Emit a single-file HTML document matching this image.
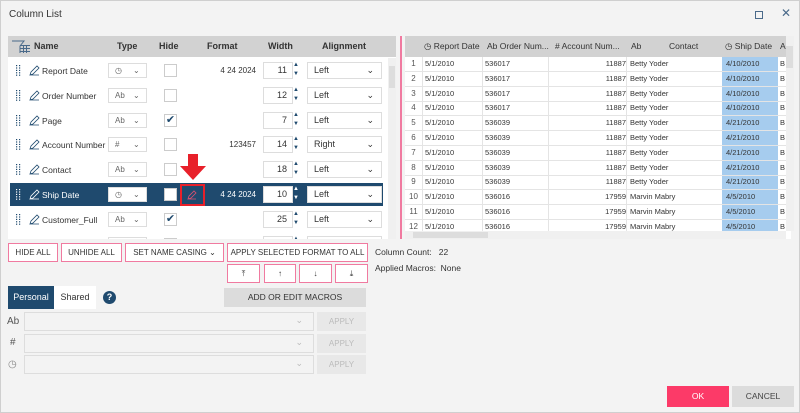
<!DOCTYPE html>
<html><head><style>
*{box-sizing:border-box;margin:0;padding:0}
body{width:800px;height:413px;background:#f3f3f3;font-family:"Liberation Sans",sans-serif;position:relative;overflow:hidden;color:#333;border:1px solid #cfcfcf}
.a{position:absolute}
.hdr{background:#d2d2d2;font-weight:bold;font-size:9px;color:#333}
.row{position:absolute;left:2px;width:373px;height:23px;background:#fff;font-size:8.5px;white-space:nowrap}
.row.sel{background:#1f4a6e;color:#fff}
.sel2{position:absolute;border:1px solid #ddd;background:#fff;height:15px;top:4px}
.cb{position:absolute;top:5px;width:13px;height:13px;border:1px solid #ccc;background:#fff;font-size:11px;color:#1f4a6e;line-height:11px;text-align:center}
.btn{position:absolute;border:1px solid #f07aa0;background:#fff;font-size:8px;text-align:center;line-height:17px;color:#333;height:19px;white-space:nowrap}
.tr{position:absolute;left:404px;width:381px;height:15px;border-bottom:1px solid #e4e4e4;font-size:7.5px;line-height:14px;white-space:nowrap}
.tr span{position:absolute}
</style></head><body>
<div class="a" style="left:8px;top:8px;font-size:10px;color:#333">Column List</div>
<div class="a" style="left:754px;top:10px;width:8px;height:8px;border:1px solid #4a6a8a"></div>
<div class="a" style="left:780px;top:5px;font-size:12px;color:#4a6a8a">✕</div>

<div class="a" style="left:7px;top:35px;width:388px;height:203px;background:#fff"></div>
<div class="a hdr" style="left:7px;top:35px;width:388px;height:21px">
<svg class="a" style="left:3px;top:3px" width="20" height="16"><path d="M1 2h12l-4 5v7" stroke="#4a6a8a" fill="none"/><g fill="#4a6a8a"><rect x="9" y="6" width="10" height="1"/><rect x="9" y="9" width="10" height="1"/><rect x="9" y="12" width="10" height="1"/><rect x="12" y="6" width="1" height="8"/><rect x="15" y="6" width="1" height="8"/></g></svg>
<span class="a" style="left:26px;top:5px">Name</span><span class="a" style="left:109px;top:5px">Type</span><span class="a" style="left:151px;top:5px">Hide</span><span class="a" style="left:199px;top:5px">Format</span><span class="a" style="left:260px;top:5px">Width</span><span class="a" style="left:314px;top:5px">Alignment</span></div>
<div class="a" style="left:387px;top:57px;width:8px;height:181px;background:#f0f0f0"></div>
<div class="a" style="left:388px;top:65px;width:6px;height:22px;background:#ddd"></div>
<div class="a" style="left:399px;top:35px;width:2px;height:203px;background:#f07aa0"></div>

<div id="rows" class="a" style="left:7px;top:57px;width:380px;height:181px;overflow:hidden"></div>
<div class="a" style="left:179px;top:183px;width:25px;height:22px;border:2px solid #e8202a"></div>
<svg class="a" style="left:185px;top:188px" width="12" height="12"><path d="M2 10l1-3 5-5 2 2-5 5z M2 10h8" stroke="#e05070" fill="none" stroke-width="0.8"/></svg>
<svg class="a" style="left:178px;top:153px" width="28" height="28"><path d="M9 0h10v12h8l-13 14-13-14h8z" fill="#e8202a"/></svg>

<div class="a" style="left:404px;top:35px;width:386px;height:203px;background:#fff"></div>
<div class="a hdr" style="left:404px;top:35px;width:381px;height:21px;font-weight:normal;font-size:8.5px;line-height:21px;white-space:nowrap;overflow:hidden">
<span class="a" style="left:19px">◷ Report Date</span><span class="a" style="left:82px">Ab Order Num...</span><span class="a" style="left:150px"># Account Num...</span><span class="a" style="left:226px">Ab</span><span class="a" style="left:264px">Contact</span><span class="a" style="left:320px">◷ Ship Date</span><span class="a" style="left:375px">A</span></div>
<div class="a" style="left:721px;top:56px;width:56px;height:174px;background:#a6ccee"></div>
<div id="trs"></div>
<div class="a" style="left:785px;top:35px;width:8px;height:195px;background:#f0f0f0"></div>
<div class="a" style="left:785px;top:45px;width:7px;height:22px;background:#ddd"></div>
<div class="a" style="left:404px;top:230px;width:381px;height:8px;background:#f0f0f0"></div>
<div class="a" style="left:412px;top:231px;width:75px;height:6px;background:#ddd"></div>

<div class="btn" style="left:7px;top:242px;width:50px">HIDE ALL</div>
<div class="btn" style="left:60px;top:242px;width:61px">UNHIDE ALL</div>
<div class="btn" style="left:124px;top:242px;width:99px">SET NAME CASING ⌄</div>
<div class="btn" style="left:226px;top:242px;width:141px">APPLY SELECTED FORMAT TO ALL</div>
<div class="btn" style="left:226px;top:263px;width:33px">⤒</div>
<div class="btn" style="left:263px;top:263px;width:32px">↑</div>
<div class="btn" style="left:298px;top:263px;width:33px">↓</div>
<div class="btn" style="left:334px;top:263px;width:33px">⤓</div>
<div class="a" style="left:374px;top:246px;font-size:8.5px">Column Count:&nbsp;&nbsp; 22</div>
<div class="a" style="left:374px;top:262px;font-size:8.5px">Applied Macros:&nbsp; None</div>

<div class="a" style="left:7px;top:285px;width:46px;height:23px;background:#1f4a6e;color:#fff;font-size:9px;line-height:23px;text-align:center">Personal</div>
<div class="a" style="left:53px;top:285px;width:42px;height:23px;background:#fff;font-size:9px;line-height:23px;text-align:center">Shared</div>
<div class="a" style="left:102px;top:290px;width:13px;height:13px;border-radius:50%;background:#1f4a6e;color:#fff;font-size:9px;font-weight:bold;text-align:center;line-height:13px">?</div>
<div class="a" style="left:223px;top:287px;width:142px;height:19px;background:#dcdcdc;font-size:8.5px;text-align:center;line-height:19px">ADD OR EDIT MACROS</div>
<div class="a" style="left:6px;top:315px;font-size:10px;color:#555">Ab</div>
<div class="a" style="left:9px;top:336px;font-size:10px;color:#555">#</div>
<div class="a" style="left:7px;top:358px;font-size:10px;color:#888">◷</div>
<div class="a" style="left:23px;top:311px;width:290px;height:19px;border:1px solid #ddd;background:#f3f3f3"><span class="a" style="right:10px;top:2px;font-size:9px;color:#bbb">⌄</span></div>
<div class="a" style="left:23px;top:333px;width:290px;height:19px;border:1px solid #ddd;background:#f3f3f3"><span class="a" style="right:10px;top:2px;font-size:9px;color:#bbb">⌄</span></div>
<div class="a" style="left:23px;top:354px;width:290px;height:19px;border:1px solid #ddd;background:#f3f3f3"><span class="a" style="right:10px;top:2px;font-size:9px;color:#bbb">⌄</span></div>
<div class="a" style="left:316px;top:311px;width:49px;height:19px;background:#e8e8e8;color:#bbb;font-size:8px;text-align:center;line-height:19px">APPLY</div>
<div class="a" style="left:316px;top:333px;width:49px;height:19px;background:#e8e8e8;color:#bbb;font-size:8px;text-align:center;line-height:19px">APPLY</div>
<div class="a" style="left:316px;top:354px;width:49px;height:19px;background:#e8e8e8;color:#bbb;font-size:8px;text-align:center;line-height:19px">APPLY</div>

<div class="a" style="left:666px;top:385px;width:62px;height:21px;background:#fc3a68;color:#fff;font-size:8.5px;text-align:center;line-height:21px">OK</div>
<div class="a" style="left:731px;top:385px;width:62px;height:21px;background:#dcdcdc;color:#444;font-size:8.5px;text-align:center;line-height:21px">CANCEL</div>

<script>
var R=[["Report Date","◷","","4 24 2024","11","Left"],["Order Number","Ab","","","12","Left"],["Page","Ab","✔","","7","Left"],["Account Number","#","","123457","14","Right"],["Contact","Ab","","","18","Left"],["Ship Date","◷","","4 24 2024","10","Left"],["Customer_Full","Ab","✔","","25","Left"],["","Ab","","","",""]];
var h="";R.forEach(function(r,i){var t=Math.round(1+i*24.8);var s=i==5;var c=s?'#fff':'#1f4a6e';
var dots='';for(var k=0;k<5;k++){dots+='<rect x="0" y="'+(k*2.4)+'" width="1.2" height="1.2"/><rect x="3" y="'+(k*2.4)+'" width="1.2" height="1.2"/>';}
h+='<div class="row'+(s?' sel':'')+'" style="top:'+t+'px">'+
'<svg class="a" style="left:6px;top:6px" width="5" height="12" fill="'+c+'">'+dots+'</svg>'+
'<svg class="a" style="left:19px;top:6px" width="11" height="11"><path d="M1 10l1-3 6-6 2 2-6 6z M1 10h9" stroke="'+c+'" fill="none" stroke-width="0.8"/></svg>'+
'<span class="a" style="left:32px;top:7px">'+r[0]+'</span>'+
'<div class="sel2" style="left:98px;width:39px;color:#666;font-size:8px;line-height:13px;padding-left:6px">'+r[1]+'<span style="position:absolute;left:24px">⌄</span></div>'+
'<div class="cb" style="left:154px">'+r[2]+'</div>'+
(r[3]?'<span class="a" style="right:127px;top:7px;font-size:8px">'+r[3]+'</span>':'')+
'<div class="sel2" style="left:253px;width:30px;height:17px;top:3px;text-align:right;padding-right:5px;color:#333;font-size:9px;line-height:15px">'+r[4]+'</div>'+
'<span class="a" style="left:283px;top:2px;font-size:6px;color:'+c+';line-height:9px">▲<br>▼</span>'+
'<div class="sel2" style="left:297px;width:75px;height:17px;top:3px;color:#333;font-size:9px;line-height:15px;padding-left:6px">'+r[5]+'<span style="position:absolute;right:7px">⌄</span></div></div>';});
document.getElementById("rows").innerHTML=h;
var g="";for(var i=0;i<12;i++){var t=Math.round(56+i*14.8);var pre=i<4?"536017":i<9?"536039":"536016";var acc=i<9?"11887":"17959";var nm=i<9?"Betty Yoder":"Marvin Mabry";var sd=i<4?"4/10/2010":i<9?"4/21/2010":"4/5/2010";
g+='<div class="tr" style="top:'+t+'px'+(i==11?';height:'+(230-t)+'px;overflow:hidden;border:0':'')+'"><span style="left:0;width:17px;text-align:center;font-size:8px;color:#555">'+(i+1)+'</span><span style="left:20px">5/1/2010</span><span style="left:80px">'+pre+'</span><span style="left:143px;width:78px;text-align:right">'+acc+'</span><span style="left:225px">'+nm+'</span><span style="left:321px">'+sd+'</span><span style="left:375px">B</span>'+
'<i style="position:absolute;left:17px;top:0;bottom:0;border-left:1px solid #e4e4e4"></i><i style="position:absolute;left:77px;top:0;bottom:0;border-left:1px solid #e4e4e4"></i><i style="position:absolute;left:143px;top:0;bottom:0;border-left:1px solid #e4e4e4"></i><i style="position:absolute;left:221px;top:0;bottom:0;border-left:1px solid #e4e4e4"></i></div>';}
document.getElementById("trs").innerHTML=g;
</script>
</body></html>
